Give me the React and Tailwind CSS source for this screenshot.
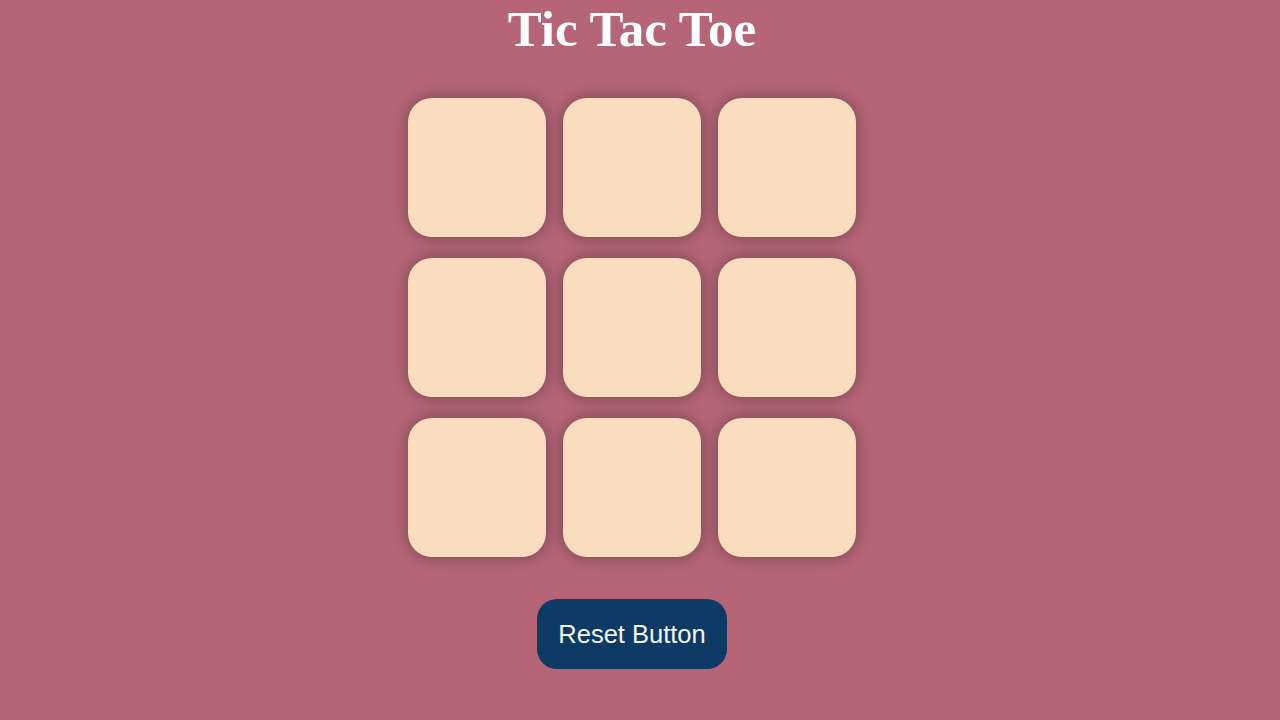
export default function App() {
    const boxes = Array.from({ length: 9 });
    return (
        <div className="min-h-screen bg-[#b56576] flex flex-col items-center text-center pr-4">
            <h1 className="mt-[2px] mb-0 text-[51px] leading-[55px] font-bold text-white [font-family:'Liberation_Serif',serif]">
                Tic Tac Toe
            </h1>
            <div className="mt-[41px] grid grid-cols-[138px_138px_138px] gap-x-[17px] gap-y-[21px]">
                {boxes.map((_, i) => (
                    <button
                        key={i}
                        className="w-[138px] h-[139px] rounded-[24px] bg-[#f9ddbe] shadow-[0_0_16px_rgba(0,0,0,0.35)]"
                    />
                ))}
            </div>
            <button className="mt-[42px] w-[190px] h-[70px] rounded-[20px] bg-[#0d3b66] text-[#f4f4f4] text-[25.5px] [font-family:'Liberation_Sans',sans-serif]">
                Reset Button
            </button>
        </div>
    );
}
